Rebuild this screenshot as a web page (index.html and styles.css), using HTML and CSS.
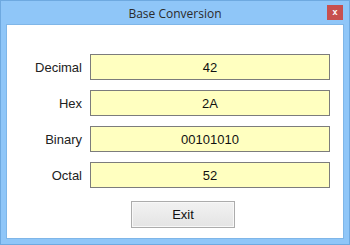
FILE: index.html
```html
<!DOCTYPE html>
<html lang="en">
<head>
    <meta charset="UTF-8">
    <meta name="viewport" content="width=device-width, initial-scale=1.0">
    <link rel="stylesheet" href="styles.css">
    <title>Base Conversion</title>
</head>
<body>

<div class="window">
    <div class="title-bar">
        <div class="title">Base Conversion</div>
        <div class="close-btn">x</div>
    </div>
    <div class="client">
        <div class="fields">
            <label class="field-label">Decimal</label>
            <div class="field-box">42</div>
            <label class="field-label">Hex</label>
            <div class="field-box">2A</div>
            <label class="field-label">Binary</label>
            <div class="field-box">00101010</div>
            <label class="field-label">Octal</label>
            <div class="field-box">52</div>
        </div>
        <div class="button-row">
            <button class="exit-btn" type="button">Exit</button>
        </div>
    </div>
</div>

</body>
</html>
```

FILE: styles.css
```css
body {
    margin: 0;
    font-family: "Liberation Sans", Arial, sans-serif;
}

.window {
    width: 350px;
    height: 245px;
    box-sizing: border-box;
    background-color: #8fc6f8;
    border: 1px solid #6ea9e0;
    display: flex;
    flex-direction: column;
}

.title-bar {
    height: 23px;
    position: relative;
    display: flex;
    align-items: center;
    justify-content: center;
}

.title {
    font-family: "Open Sans", sans-serif;
    font-size: 12px;
    color: #2b2b2b;
    margin-top: 1px;
}

.close-btn {
    position: absolute;
    right: 6px;
    top: 4px;
    width: 16px;
    height: 15px;
    background-color: #c7504f;
    color: #fff;
    font-size: 9px;
    font-weight: bold;
    line-height: 14px;
    text-align: center;
}

.client {
    margin: 0 5px 0 5px;
    height: 213px;
    background-color: #fff;
    border: 1px solid #7fb6e8;
}

.fields {
    display: grid;
    grid-template-columns: 75px 240px;
    grid-auto-rows: 26px;
    column-gap: 8px;
    row-gap: 10px;
    padding-top: 29px;
}

.field-label {
    font-size: 13px;
    color: #222;
    text-align: right;
    align-self: center;
}

.field-box {
    box-sizing: border-box;
    background-color: #ffffc0;
    border: 1px solid #7c7c7c;
    font-size: 13px;
    color: #111;
    display: flex;
    align-items: center;
    justify-content: center;
}

.button-row {
    display: flex;
    padding-left: 124px;
    margin-top: 13px;
}

.exit-btn {
    width: 104px;
    height: 27px;
    font-family: "Liberation Sans", Arial, sans-serif;
    font-size: 13px;
    color: #111;
    background: linear-gradient(#f2f2f2, #e4e4e4);
    border: 1px solid #acacac;
    box-shadow: inset 0 0 0 1px #f8f8f8;
    padding: 0;
}
```
